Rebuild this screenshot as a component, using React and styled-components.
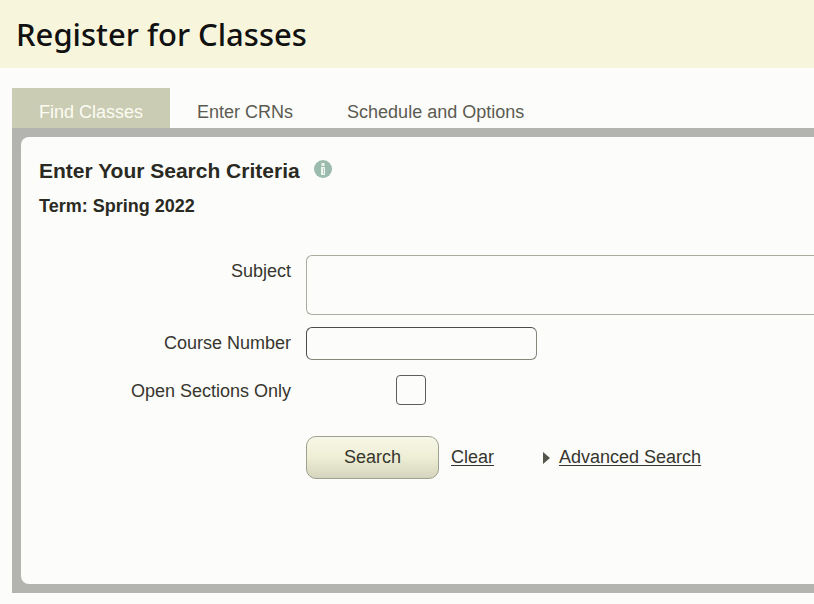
import React from "react";
import styled, { createGlobalStyle } from "styled-components";

const GlobalStyle = createGlobalStyle`
  * { box-sizing: border-box; }
  body {
    margin: 0;
    background: #fcfcfa;
    color: #36362e;
    font-family: "Liberation Sans", Arial, sans-serif;
    font-size: 18px;
    line-height: 24px;
  }
  input, button { font: inherit; color: inherit; margin: 0; }
`;

const Header = styled.header`
  background: #f7f6dc;
  padding: 14px 16px;
`;

const Title = styled.h1`
  margin: 0;
  color: #111;
  font: 500 31px/40px "Noto Sans", sans-serif;
`;

const Main = styled.main`
  padding: 20px 0 12px 12px;
`;

const Tabs = styled.div`
  display: flex;
  height: 40px;
`;

const Tab = styled.button`
  padding: 8px 27px 0;
  border: 0;
  background: ${(p) => (p["aria-selected"] ? "#cbccb4" : "transparent")};
  color: ${(p) => (p["aria-selected"] ? "#fcfcf2" : "#5b5b52")};
  white-space: nowrap;
`;

const Frame = styled.div`
  background: #b3b4b0;
  padding: 9px 0 9px 9px;
`;

const Panel = styled.section`
  min-height: 447px;
  padding: 20px 0 20px 18px;
  border-radius: 8px 0 0 8px;
  background: #fcfcfa;
`;

const HeadingRow = styled.div`
  display: flex;
  align-items: flex-start;
  gap: 14px;
  height: 28px;
`;

const Heading = styled.h2`
  margin: 0;
  color: #2a2a22;
  font-size: 21px;
  line-height: 28px;
`;

const InfoButton = styled.button`
  display: flex;
  padding: 3px 0 0;
  border: 0;
  background: none;
`;

const Term = styled.p`
  margin: 9px 0 37px;
  color: #2a2a22;
  font-weight: bold;
`;

const Form = styled.form`
  display: grid;
  grid-template-columns: 252px 1fr;
  column-gap: 15px;
`;

const Label = styled.label`
  padding-top: 4px;
  text-align: right;
`;

const SubjectInput = styled.input`
  width: 100%;
  height: 60px;
  margin-bottom: 12px;
  padding: 0 10px;
  border: 1px solid #aaaaa0;
  border-right: 0;
  border-radius: 6px 0 0 6px;
  background: transparent;
`;

const NumberInput = styled.input`
  width: 231px;
  height: 33px;
  margin-bottom: 15px;
  padding: 0 10px;
  border: 1px solid;
  border-color: #4c4c4c #85857c #85857c #4c4c4c;
  border-radius: 6px;
  background: transparent;
`;

const Checkbox = styled.input`
  appearance: none;
  width: 30px;
  height: 30px;
  margin-left: 90px;
  border: 1px solid #5e5e60;
  border-radius: 4px;
  background: transparent;
  &:checked { background: #5e5e60; }
`;

const Actions = styled.div`
  grid-column: 2;
  display: flex;
  align-items: center;
  margin-top: 31px;
`;

const SearchButton = styled.button`
  width: 133px;
  height: 43px;
  padding: 0 0 2px;
  border: 1px solid #a0a08e;
  border-radius: 10px;
  background: linear-gradient(#f7f7e8, #eeeed5 50%, #d5d5bf);
`;

const Link = styled.a`
  padding-bottom: 2px;
  color: #36362e;
  text-decoration: underline;
  text-underline-offset: 2px;
`;

const ClearLink = styled(Link)`
  margin: 0 49px 0 12px;
`;

const AdvancedLink = styled(Link)`
  margin-left: 9px;
`;

const InfoIcon = () => (
  <svg width="18" height="18" viewBox="0 0 18 18" aria-hidden="true">
    <circle cx="9" cy="9" r="9" fill="#9bbbaf" />
    <path d="M7.5 3h3v3h-3zM7 7h4v8H7z" fill="#eff6ec" />
    <path d="M9.5 8v6" stroke="#b9d0c5" strokeWidth="1" />
  </svg>
);

const Arrow = () => (
  <svg width="7" height="12" viewBox="0 0 7 12" aria-hidden="true">
    <path d="M0 0l7 6-7 6z" fill="#55554b" />
  </svg>
);

export default function App() {
  return (
    <>
      <GlobalStyle />
      <Header>
        <Title>Register for Classes</Title>
      </Header>
      <Main>
        <Tabs role="tablist">
          <Tab role="tab" aria-selected={true}>Find Classes</Tab>
          <Tab role="tab" aria-selected={false}>Enter CRNs</Tab>
          <Tab role="tab" aria-selected={false}>Schedule and Options</Tab>
        </Tabs>
        <Frame>
          <Panel>
            <HeadingRow>
              <Heading>Enter Your Search Criteria</Heading>
              <InfoButton type="button" aria-label="Information">
                <InfoIcon />
              </InfoButton>
            </HeadingRow>
            <Term>Term: Spring 2022</Term>
            <Form onSubmit={(e) => e.preventDefault()}>
              <Label htmlFor="subject">Subject</Label>
              <SubjectInput id="subject" type="text" />
              <Label htmlFor="course-number">Course Number</Label>
              <NumberInput id="course-number" type="text" />
              <Label htmlFor="open-only">Open Sections Only</Label>
              <Checkbox id="open-only" type="checkbox" />
              <Actions>
                <SearchButton type="submit">Search</SearchButton>
                <ClearLink href="#clear">Clear</ClearLink>
                <Arrow />
                <AdvancedLink href="#advanced">Advanced Search</AdvancedLink>
              </Actions>
            </Form>
          </Panel>
        </Frame>
      </Main>
    </>
  );
}
